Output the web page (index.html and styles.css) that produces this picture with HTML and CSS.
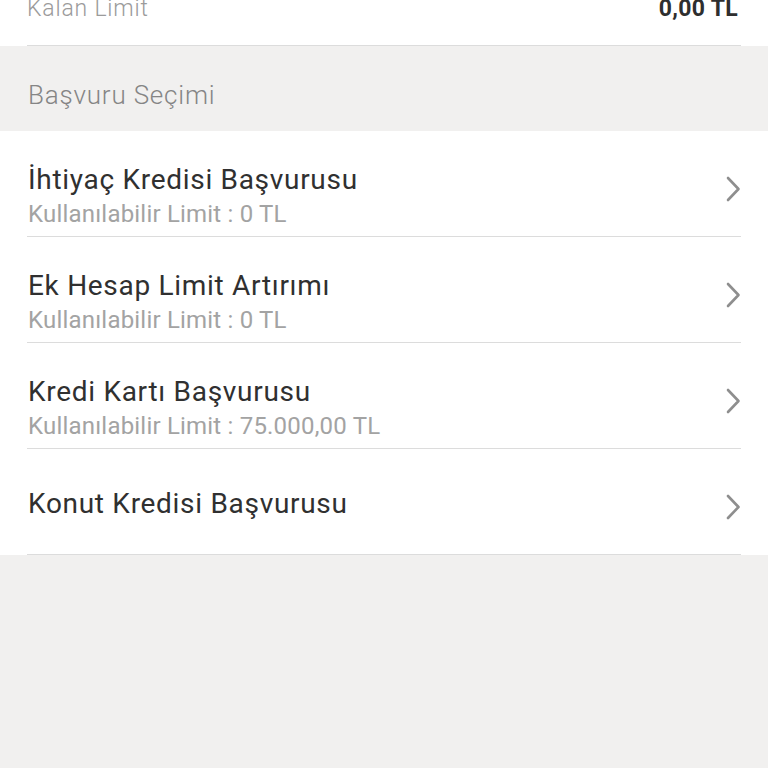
FILE: index.html
```html
<!DOCTYPE html>
<html lang="tr">
<head>
<meta charset="utf-8">
<title>Başvuru Seçimi</title>
<link rel="stylesheet" href="styles.css">
</head>
<body>
  <section class="summary">
    <div class="summary-row">
      <span class="summary-label">Kalan Limit</span>
      <span class="summary-value">0,00 TL</span>
    </div>
  </section>

  <div class="section-header">Başvuru Seçimi</div>

  <ul class="list">
    <li class="item">
      <div class="item-text">
        <div class="item-title">İhtiyaç Kredisi Başvurusu</div>
        <div class="item-sub">Kullanılabilir Limit : 0 TL</div>
      </div>
      <svg class="chevron" width="16" height="26" viewBox="0 0 16 26"><polyline points="3,2 13.5,13 3,24" /></svg>
    </li>
    <li class="item">
      <div class="item-text">
        <div class="item-title">Ek Hesap Limit Artırımı</div>
        <div class="item-sub">Kullanılabilir Limit : 0 TL</div>
      </div>
      <svg class="chevron" width="16" height="26" viewBox="0 0 16 26"><polyline points="3,2 13.5,13 3,24" /></svg>
    </li>
    <li class="item">
      <div class="item-text">
        <div class="item-title">Kredi Kartı Başvurusu</div>
        <div class="item-sub">Kullanılabilir Limit : 75.000,00 TL</div>
      </div>
      <svg class="chevron" width="16" height="26" viewBox="0 0 16 26"><polyline points="3,2 13.5,13 3,24" /></svg>
    </li>
    <li class="item">
      <div class="item-text single">
        <div class="item-title">Konut Kredisi Başvurusu</div>
      </div>
      <svg class="chevron" width="16" height="26" viewBox="0 0 16 26"><polyline points="3,2 13.5,13 3,24" /></svg>
    </li>
  </ul>
</body>
</html>
```

FILE: styles.css
```css
html, body {
  margin: 0;
  padding: 0;
}

body {
  background: #f1f0ef;
  font-family: Roboto, "Noto Sans", "Liberation Sans", sans-serif;
  color: #333333;
  overflow: hidden;
}

.summary {
  background: #ffffff;
  margin-top: -5px;
  padding: 0 27px;
}

.summary-row {
  display: flex;
  justify-content: space-between;
  align-items: flex-start;
  height: 51px;
  box-sizing: border-box;
  border-bottom: 1px solid #dcdcdc;
  line-height: 28px;
  font-size: 23px;
}

.summary-label {
  font-weight: 300;
  color: #9b9b9b;
  letter-spacing: 0.8px;
}

.summary-value {
  font-weight: 700;
  color: #2e2e2e;
  margin-right: 3px;
  letter-spacing: 0.3px;
}

.section-header {
  height: 85px;
  box-sizing: border-box;
  padding: 34px 28px 0;
  font-size: 26px;
  line-height: 30px;
  font-weight: 300;
  color: #858585;
  letter-spacing: 0.8px;
}

.list {
  list-style: none;
  margin: 0;
  padding: 0 27px;
  background: #ffffff;
}

.item {
  display: flex;
  align-items: flex-start;
  justify-content: space-between;
  height: 106px;
  box-sizing: border-box;
  border-bottom: 1px solid #dcdcdc;
}

.item-text {
  padding-top: 32px;
  padding-left: 1px;
}

.item-text.single {
  padding-top: 38px;
}

.item-title {
  font-size: 28px;
  line-height: 34px;
  color: #303030;
  letter-spacing: 0.7px;
}

.item-sub {
  font-size: 24px;
  line-height: 34px;
  color: #a3a3a3;
  letter-spacing: 0.2px;
}

.chevron {
  margin-top: 45px;
  fill: none;
  stroke: #8e8e8e;
  stroke-width: 2.6;
  stroke-linecap: round;
  stroke-linejoin: round;
}
```
